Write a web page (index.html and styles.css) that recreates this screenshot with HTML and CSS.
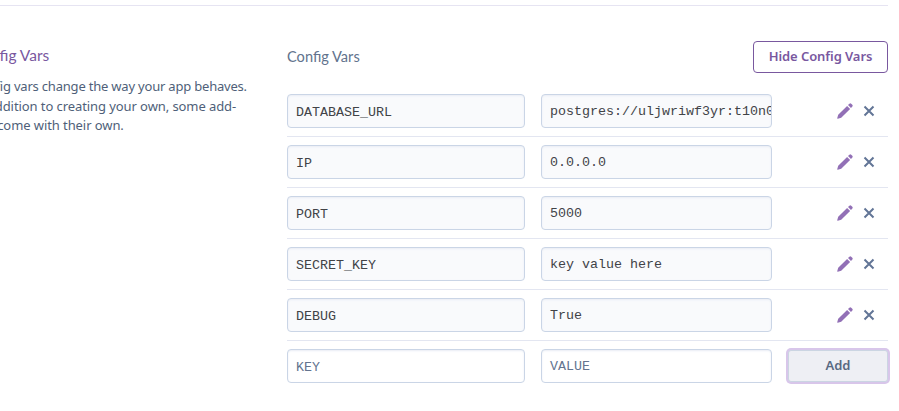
FILE: index.html
```html
<!DOCTYPE html>
<html lang="en">
<head>
<meta charset="utf-8">
<title>Config Vars</title>
<link rel="stylesheet" href="styles.css">
</head>
<body>
<svg class="sprite" aria-hidden="true">
  <symbol id="pencil" viewBox="0 0 16 16"><path d="M1.2 11.8 10.1 2.9 13.1 5.9 4.2 14.8.8 15.8Q.1 15.9.2 15.2ZM11 2 12.4.7Q13.3-.1 14.2.7L15.3 1.8Q16.1 2.7 15.3 3.6L14 5Z"/></symbol>
  <symbol id="cross" viewBox="0 0 12 12"><path d="M1.5 1.5 10.5 10.5M10.5 1.5 1.5 10.5"/></symbol>
</svg>
<main class="settings">
  <aside class="about">
    <h2 class="about-title">Config Vars</h2>
    <p class="about-text"><span class="line tight">Config vars change the way your app behaves.</span><span class="line">In addition to creating your own, some add-</span><span class="line">ons come with their own.</span></p>
  </aside>
  <section class="vars">
    <header class="vars-head">
      <h3 class="vars-title">Config Vars</h3>
      <button class="toggle">Hide Config Vars</button>
    </header>
    <div class="row"><div class="field">DATABASE_URL</div><div class="field value">postgres://uljwriwf3yr:t10n0</div><div class="actions"><svg class="edit"><use href="#pencil"/></svg><svg class="remove"><use href="#cross"/></svg></div></div>
    <div class="row"><div class="field">IP</div><div class="field value">0.0.0.0</div><div class="actions"><svg class="edit"><use href="#pencil"/></svg><svg class="remove"><use href="#cross"/></svg></div></div>
    <div class="row"><div class="field">PORT</div><div class="field value">5000</div><div class="actions"><svg class="edit"><use href="#pencil"/></svg><svg class="remove"><use href="#cross"/></svg></div></div>
    <div class="row"><div class="field">SECRET_KEY</div><div class="field value">key value here</div><div class="actions"><svg class="edit"><use href="#pencil"/></svg><svg class="remove"><use href="#cross"/></svg></div></div>
    <div class="row"><div class="field">DEBUG</div><div class="field value">True</div><div class="actions"><svg class="edit"><use href="#pencil"/></svg><svg class="remove"><use href="#cross"/></svg></div></div>
    <div class="row new"><div class="field">KEY</div><div class="field value">VALUE</div><button class="add">Add</button></div>
  </section>
</main>
</body>
</html>
```
FILE: styles.css
```css
* { box-sizing: border-box; }
body {
  margin: 0;
  padding-top: 5px;
  overflow: hidden;
  background: #fff;
  color: #4f5f79;
  font-family: Lato, "Noto Sans", sans-serif;
}
h2, h3, p { margin: 0; font-weight: 400; }
.sprite { display: none; }
.settings {
  display: grid;
  grid-template-columns: 287px 601px;
  width: 888px;
  border-top: 1px solid #e6e4f2;
  padding-top: 35px;
}
.about { margin-left: -28px; white-space: nowrap; }
.about-title {
  margin-top: 3px;
  color: #79589f;
  font-size: 15.5px;
  line-height: 22px;
}
.about-text {
  margin-top: 11px;
  font: 13px/19.5px "Noto Sans", sans-serif;
  letter-spacing: -0.08px;
}
.line { display: block; }
.tight { letter-spacing: -0.2px; }
.vars-head {
  display: flex;
  justify-content: space-between;
  height: 45px;
}
.vars-title { color: #62738d; font-size: 14.6px; line-height: 31px; }
.toggle {
  width: 135px;
  height: 32px;
  padding: 0;
  border: 1px solid #79589f;
  border-radius: 4px;
  background: #fff;
  color: #79589f;
  font: 600 13px/28px "Noto Sans", sans-serif;
  letter-spacing: -0.08px;
  padding-bottom: 2px;
}
.row {
  display: grid;
  grid-template-columns: 238px 231px 1fr;
  column-gap: 16px;
  height: 51px;
  padding-top: 8px;
  border-bottom: 1px solid #e3e6f1;
}
.row.new { border-bottom: 0; }
.field {
  height: 34px;
  padding: 2px 0 0 8px;
  overflow: hidden;
  border: 1px solid #cad5e6;
  border-radius: 4px;
  background: #f9fafc;
  box-shadow: inset 0 1px 2px #e9edf5;
  color: #414347;
  font: 13.33px/32px "Liberation Mono", monospace;
  white-space: nowrap;
}
.value { padding-top: 1px; }
.new .field { background: #fff; color: #63748f; }
.actions {
  display: flex;
  align-items: center;
  height: 34px;
  padding-left: 49px;
}
.edit { width: 16px; height: 16px; fill: #9270b6; }
.remove {
  width: 12px;
  height: 12px;
  margin-left: 10px;
  fill: none;
  stroke: #627596;
  stroke-width: 2;
}
.add {
  width: 100px;
  height: 32px;
  margin-top: 1px;
  padding: 0 0 2px;
  border: 1px solid #cbd5e2;
  border-radius: 3px;
  background: #eeeff4;
  box-shadow: 0 0 0 2px #d8c6ea;
  color: #596981;
  font: 600 13px/28px "Noto Sans", sans-serif;
}
```
